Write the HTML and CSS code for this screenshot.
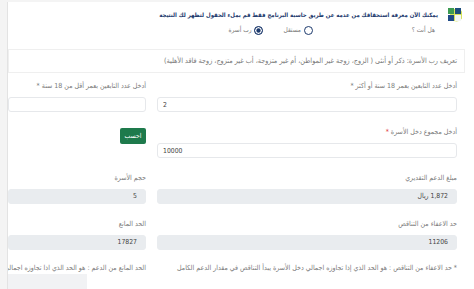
FILE: index.html
```html
<!DOCTYPE html>
<html lang="ar" dir="rtl">
<head>
	<meta charset="UTF-8">
	<title>حاسبة الاستحقاق</title>
	<link rel="stylesheet" href="styles.css">
</head>
<body>
	<div class="page">
		<div class="intro">
			<svg class="logo" width="15" height="15" viewBox="0 0 15 15">
				<circle cx="9.5" cy="8" r="6.5" fill="#d3e25a"/>
				<rect x="1" y="1" width="6" height="6" fill="#3c9b52"/>
				<rect x="8" y="1" width="6" height="6" fill="#1d4f7e"/>
				<rect x="1" y="8" width="6" height="6" fill="#1f4a86"/>
				<rect x="8" y="8" width="6" height="6" fill="#f2f6f4"/>
			</svg>
			<p class="intro_text">يمكنك الآن معرفة استحقاقك من عدمه عن طريق حاسبة البرنامج فقط قم بملء الحقول لتظهر لك النتيجة</p>
		</div>

		<div class="role">
			<span class="role_label">هل أنت ؟</span>
			<label class="radio"><span class="dot"></span>مستقل</label>
			<label class="radio"><span class="dot checked"></span>رب أسرة</label>
		</div>

		<div class="hint">تعريف رب الأسرة: ذكر أو أنثى ( الزوج، زوجة غير المواطن، أم غير متزوجة، أب غير متزوج، زوجة فاقد الأهلية)</div>

		<div class="form">
			<div class="field">
				<label>أدخل عدد التابعين بعمر 18 سنة أو أكثر <i>*</i></label>
				<input class="input ltr" type="text" value="2">
			</div>
			<div class="field">
				<label>أدخل عدد التابعين بعمر أقل من 18 سنة <i>*</i></label>
				<input class="input ltr" type="text" value="">
			</div>

			<div class="field">
				<label>أدخل مجموع دخل الأسرة <i class="red">*</i></label>
				<input class="input ltr" type="text" value="10000">
			</div>
			<div class="field">
				<button class="btn">احسب</button>
			</div>

			<div class="field">
				<label>مبلغ الدعم التقديري</label>
				<div class="input readonly">1,872 ريال</div>
			</div>
			<div class="field">
				<label>حجم الأسرة</label>
				<div class="input readonly">5</div>
			</div>

			<div class="field">
				<label>حد الاعفاء من التناقص</label>
				<div class="input readonly">11206</div>
			</div>
			<div class="field">
				<label>الحد المانع</label>
				<div class="input readonly">17827</div>
			</div>

			<p class="note">* حد الاعفاء من التناقص : هو الحد الذي إذا تجاوزه اجمالي دخل الأسرة يبدأ التناقص في مقدار الدعم الكامل</p>
			<p class="note">الحد المانع من الدعم : هو الحد الذي اذا تجاوزه اجمالي دخل الأسرة يتوقف الدعم</p>
		</div>

		<div class="bottom"></div>
	</div>
</body>
</html>
```

FILE: styles.css
```css
* {
	padding: 0;
	margin: 0;
	box-sizing: border-box;
}
body {
	background: #f4f4f4;
	font-family: "DejaVu Sans Condensed", "DejaVu Sans", sans-serif;
	color: #7a7a7a;
	overflow: hidden;
}
.page {
	margin: 2px 0 0 7px;
	border-left: 1px solid #e3e3e3;
	background: #fff;
	padding: 4px 9px 0 0;
	height: 287px;
	overflow: hidden;
}
.intro {
	display: flex;
	align-items: center;
	gap: 9px;
	height: 17px;
	padding-right: 3px;
}
.intro_text {
	font-size: 6px;
	font-weight: bold;
	color: #1d3a6d;
	white-space: nowrap;
}
.role {
	display: flex;
	align-items: center;
	height: 10px;
	margin-top: 2px;
	font-size: 6.5px;
}
.role_label {
	width: 152px;
	padding-right: 30px;
}
.radio {
	display: flex;
	align-items: center;
	gap: 3px;
	margin-left: 20px;
}
.dot {
	width: 9px;
	height: 9px;
	border: 1.5px solid #1d3a6d;
	border-radius: 50%;
}
.dot.checked {
	background: #1d3a6d;
	box-shadow: inset 0 0 0 1.3px #fff;
}
.hint {
	margin-top: 14px;
	height: 24px;
	border: 1px solid #efefef;
	padding: 0 7px;
	line-height: 22px;
	font-size: 7.2px;
	white-space: nowrap;
}
.form {
	display: grid;
	grid-template-columns: 300px minmax(0, 1fr);
	column-gap: 11px;
	row-gap: 15px;
	margin-top: 8px;
	padding-right: 8px;
}
.field label {
	display: block;
	height: 10px;
	line-height: 10px;
	font-size: 7px;
	white-space: nowrap;
	margin-bottom: 6px;
}
.field i {
	font-style: normal;
}
.field i.red {
	color: #e03a3a;
}
.input {
	display: block;
	width: 100%;
	height: 15px;
	border: 1px solid #e6e8eb;
	border-radius: 3px;
	background: #fff;
	font-family: "DejaVu Sans Condensed", "DejaVu Sans", sans-serif;
	font-size: 6.8px;
	color: #444;
	padding: 0 5px;
	outline: none;
}
.ltr {
	direction: ltr;
	text-align: left;
}
.readonly {
	background: #e9ecef;
	border-color: #e9ecef;
	line-height: 13px;
	padding: 0 8px;
}
.btn {
	display: block;
	margin-top: 0.5px;
	width: 26px;
	height: 16px;
	background: #1e7a4c;
	color: #fff;
	border: none;
	border-radius: 2px;
	font-family: "DejaVu Sans Condensed", "DejaVu Sans", sans-serif;
	font-size: 6.8px;
	cursor: pointer;
}
.note {
	font-size: 7px;
	line-height: 10px;
	white-space: nowrap;
	margin-top: -2px;
}
.bottom {
	width: 79px;
	height: 20px;
	margin: 1px auto 0 0;
	background: #f1f2f4;
}
```
